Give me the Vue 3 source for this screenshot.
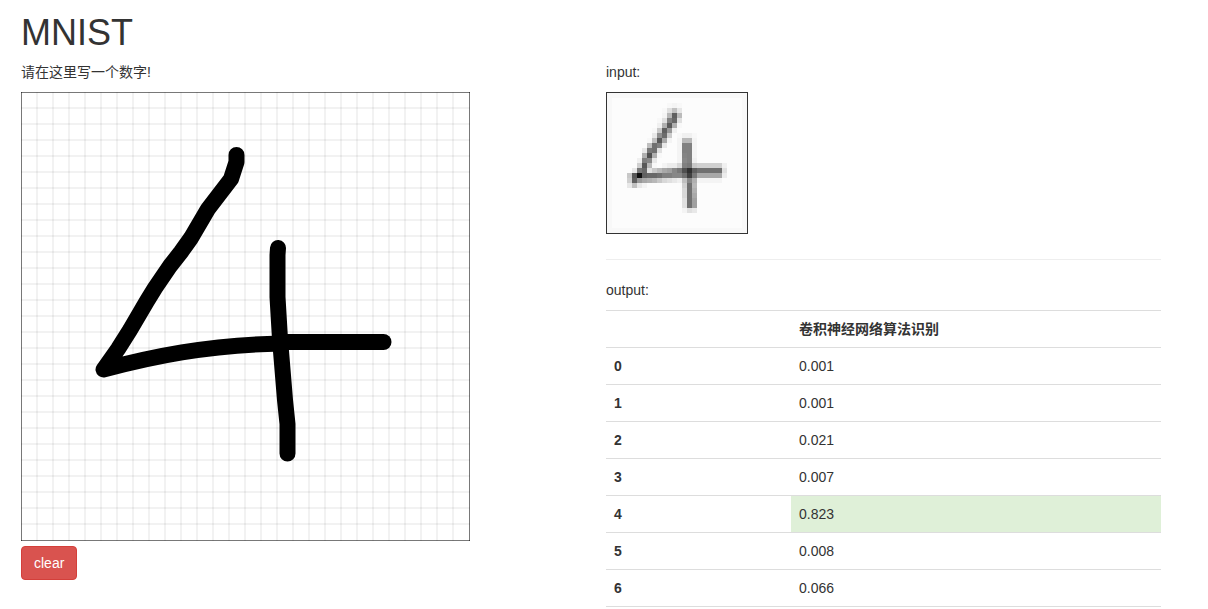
<script setup>
const gridLines = Array.from({ length: 27 }, (_, i) => (i + 1) * 16)

// Each entry: row, first column, grey levels (hex pairs) of consecutive cells
const samples = [
  [2, 12, 'f8f4f8'],
  [3, 11, 'f8dfc0e6'],
  [4, 11, 'f4b860bb'],
  [5, 10, 'f8e08068e0'],
  [6, 10, 'f0b05ab0f8'],
  [7, 9, 'f8c86098f0'],
  [8, 9, 'e8906ccc'],
  [9, 8, 'f8c058a8f4'],
  [10, 8, 'c07080e8'],
  [11, 7, 'e87870e0'],
  [12, 7, 'b050b0f8'],
  [13, 6, 'f08088e8'],
  [14, 6, 'd058b8f8'],
  [15, 5, 'e87868e0c8b8a8a0887870'],
  [16, 4, 'c858106068687080808888'],
  [17, 4, 'd06098a8b0b8c8d8e0e8f0'],
  [18, 4, 'e8c0e8f4'],
  [8, 14, 'f8f0f0f8'],
  [9, 14, 'f4b8b8f4'],
  [10, 14, 'f48080f4'],
  [11, 14, 'f48080f4'],
  [12, 14, 'f48480f4'],
  [13, 14, 'f48880f0'],
  [14, 11, 'f4ececd88078c8d0d0d0d0d0f0'],
  [15, 15, '5030607070707070e0'],
  [16, 15, '704078a8a8a8a8a8ec'],
  [17, 15, 'c088b0f4f4f4f4f4'],
  [18, 15, 'd070b8'],
  [19, 15, 'd870b0'],
  [20, 15, 'd870a8'],
  [21, 15, 'e070a0'],
  [22, 15, 'e070a0'],
  [23, 15, 'f4e0e8']
]
const cells = samples.flatMap(([row, start, levels]) =>
  levels.match(/../g).map((g, i) => ({ x: (start + i) * 5, y: row * 5, fill: `#${g}${g}${g}` }))
)

const results = ['0.001', '0.001', '0.021', '0.007', '0.823', '0.008', '0.066']
const best = 4
</script>

<template>
  <main class="page">
    <section class="column">
      <h1>MNIST</h1>
      <p>请在这里写一个数字!</p>
      <svg class="board" width="449" height="449" viewBox="0 0 449 449" role="img" aria-label="4">
        <g class="grid">
          <path v-for="n in gridLines" :key="'v' + n" :d="`M${n} 0V449`" />
          <path v-for="n in gridLines" :key="'h' + n" :d="`M0 ${n}H449`" />
        </g>
        <path class="frame" d="M0 .5H449M0 448.5H449M.5 0V449M448.5 0V449" />
        <g class="ink">
          <path d="M215.5 63V70L210 87L187 117L170 146L160 160L149 174L134 196L126 209L109 238L97 257L82.500 277.500C130 265 185 253 260 251.500" />
          <path d="M262 250H362.500" />
          <path d="M257 156L256.500 163V205L259 247L264 308L266.500 332V361.500" />
        </g>
      </svg>
      <button type="button" class="clear">clear</button>
    </section>
    <section class="column results">
      <p>input:</p>
      <svg class="sample" width="140" height="140" viewBox="0 0 140 140" shape-rendering="crispEdges" role="img" aria-label="4">
        <rect width="140" height="140" fill="#f8f8f8" />
        <rect x="5" y="5" width="130" height="130" fill="#fcfcfc" />
        <rect v-for="(c, i) in cells" :key="i" :x="c.x" :y="c.y" width="5" height="5" :fill="c.fill" />
      </svg>
      <hr />
      <p>output:</p>
      <table>
        <thead>
          <tr>
            <td></td>
            <th scope="col">卷积神经网络算法识别</th>
          </tr>
        </thead>
        <tbody>
          <tr v-for="(value, digit) in results" :key="digit">
            <th scope="row">{{ digit }}</th>
            <td :class="{ success: digit === best }">{{ value }}</td>
          </tr>
        </tbody>
      </table>
    </section>
  </main>
</template>

<style>
body {
  background: #fff;
}
</style>

<style scoped>
.page {
  display: grid;
  grid-template-columns: 1fr 1fr;
  column-gap: 30px;
  padding: 12px 47px 0 21px;
  color: #333;
  font: 14px/20px "Liberation Sans", Arial, "Noto Sans CJK SC", sans-serif;
}
.column {
  min-width: 0;
}
.results {
  padding-top: 50px;
}
h1 {
  margin: 0 0 8px;
  font-size: 36px;
  font-weight: 500;
  line-height: 42px;
}
p {
  margin: 0 0 10px;
}
svg {
  display: block;
}
.grid path {
  stroke: rgba(0, 0, 0, 0.05);
  stroke-width: 2;
}
.frame {
  stroke: rgba(0, 0, 0, 0.53);
}
.ink path {
  fill: none;
  stroke: #000;
  stroke-width: 16;
  stroke-linecap: round;
  stroke-linejoin: round;
}
.clear {
  display: block;
  margin: 5px 0 0;
  padding: 6px 12px;
  border: 1px solid #d43f3a;
  border-radius: 4px;
  background: #d9534f;
  color: #fff;
  font: inherit;
  cursor: pointer;
}
.sample {
  border: 1px solid #333;
}
hr {
  margin: 25px 0 20px;
  border: 0;
  border-top: 1px solid #eee;
}
table {
  width: 100%;
  border-spacing: 0;
  border-bottom: 1px solid #ddd;
  table-layout: fixed;
}
th,
td {
  height: 20px;
  padding: 8px;
  border-top: 1px solid #ddd;
  text-align: left;
  vertical-align: top;
}
tr > :first-child {
  width: 33.333%;
  box-sizing: border-box;
  height: 37px;
}
.success {
  background: #dff0d8;
}
</style>
